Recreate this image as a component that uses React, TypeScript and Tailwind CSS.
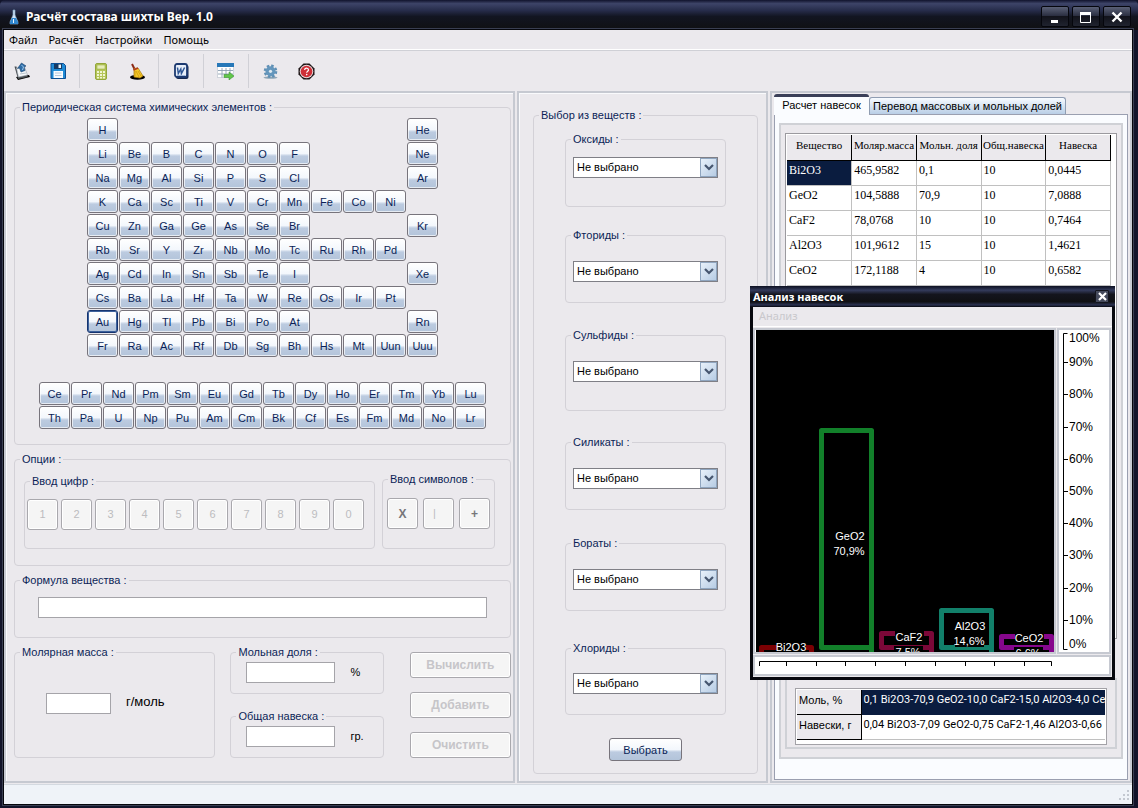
import React, { useState } from 'react';

const mainTable = [
  ['H', '', '', '', '', '', '', '', '', '', 'He'],
  ['Li', 'Be', 'B', 'C', 'N', 'O', 'F', '', '', '', 'Ne'],
  ['Na', 'Mg', 'Al', 'Si', 'P', 'S', 'Cl', '', '', '', 'Ar'],
  ['K', 'Ca', 'Sc', 'Ti', 'V', 'Cr', 'Mn', 'Fe', 'Co', 'Ni', ''],
  ['Cu', 'Zn', 'Ga', 'Ge', 'As', 'Se', 'Br', '', '', '', 'Kr'],
  ['Rb', 'Sr', 'Y', 'Zr', 'Nb', 'Mo', 'Tc', 'Ru', 'Rh', 'Pd', ''],
  ['Ag', 'Cd', 'In', 'Sn', 'Sb', 'Te', 'I', '', '', '', 'Xe'],
  ['Cs', 'Ba', 'La', 'Hf', 'Ta', 'W', 'Re', 'Os', 'Ir', 'Pt', ''],
  ['Au', 'Hg', 'Tl', 'Pb', 'Bi', 'Po', 'At', '', '', '', 'Rn'],
  ['Fr', 'Ra', 'Ac', 'Rf', 'Db', 'Sg', 'Bh', 'Hs', 'Mt', 'Uun', 'Uuu'],
];

const rareEarths = [
  'Ce', 'Pr', 'Nd', 'Pm', 'Sm', 'Eu', 'Gd', 'Tb', 'Dy', 'Ho', 'Er', 'Tm', 'Yb', 'Lu',
  'Th', 'Pa', 'U', 'Np', 'Pu', 'Am', 'Cm', 'Bk', 'Cf', 'Es', 'Fm', 'Md', 'No', 'Lr',
];

const digits = ['1', '2', '3', '4', '5', '6', '7', '8', '9', '0'];

const substances = [
  { name: 'Оксиды', margin: '', padding: 'pt-[11px] pb-[28px]' },
  { name: 'Фториды', margin: 'mt-[21px]', padding: 'pt-[19px] pb-[20px]' },
  { name: 'Сульфиды', margin: 'mt-[25px]', padding: 'pt-[19px] pb-[28px]' },
  { name: 'Силикаты', margin: 'mt-[24px]', padding: 'pt-[19px] pb-[20px]' },
  { name: 'Бораты', margin: 'mt-[26px]', padding: 'pt-[19px] pb-[20px]' },
  { name: 'Хлориды', margin: 'mt-[30px]', padding: 'pt-[18px] pb-[20px]' },
];

const columns = ['Вещество', 'Моляр.масса', 'Мольн. доля', 'Общ.навеска', 'Навеска'];
const rows = [
  ['Bi2O3', '465,9582', '0,1', '10', '0,0445'],
  ['GeO2', '104,5888', '70,9', '10', '7,0888'],
  ['CaF2', '78,0768', '10', '10', '0,7464'],
  ['Al2O3', '101,9612', '15', '10', '1,4621'],
  ['CeO2', '172,1188', '4', '10', '0,6582'],
];

interface GroupProps {
  title: string;
  className?: string;
  bodyClass?: string;
  children?: React.ReactNode;
}

const Group: React.FC<GroupProps> = ({ title, className = '', bodyClass = '', children }) => (
  <fieldset className={`min-w-0 rounded-[4px] border border-[#d3d1d7] ${className}`}>
    <legend className="ml-[5px] px-[2px] text-[11px] leading-[14px] whitespace-nowrap text-[#0b1f57]">{title} :</legend>
    <div className={bodyClass}>{children}</div>
  </fieldset>
);

const ElementButton: React.FC<{ symbol: string; focused?: boolean }> = ({ symbol, focused }) => (
  <button
    type="button"
    className={`h-[23px] w-[31px] rounded-[3px] border bg-[linear-gradient(#ffffff,#f3f7fc_50%,#bccbe0_62%,#b3c4da)] text-[11px] leading-[20px] text-[#0b1f57] ${
      focused
        ? 'border-[#153470] shadow-[inset_0_0_0_1px_#3c619c]'
        : 'border-[#77747c] shadow-[inset_0_0_0_1px_#ffffffaa]'
    }`}
  >
    {symbol}
  </button>
);

const disabledButton = 'rounded-[3px] border border-[#a9a8ad] bg-[#f5f5f5] shadow-[inset_0_0_0_1px_#ffffff]';
const textInput = 'h-[21px] border border-[#a5a4a9] bg-white px-1 text-[11px]';
const sunken = 'border-2 border-[#c6c9d1] shadow-[inset_1px_1px_0_#f9fafc]';

const Separator = () => <div className="mx-[3px] h-[34px] w-px bg-[#d0d0d6]" />;

/* ---------- toolbar icons ---------- */

const OpenIcon = () => (
  <svg width="18" height="18" viewBox="0 0 18 18">
    <path d="M3 15l13-2 1 2-12 3z" fill="#000" />
    <path d="M1.500 4.500h2l2 10 8-1.500 1.500 2-10 2z" fill="#4b5054" />
    <path d="M3.500 6l8-1 3 8-9 2z" fill="#f4f7fa" stroke="#9aa3ad" strokeWidth=".6" />
    <path d="M8.500 1l4.500 3-2 1 1 3.500-4 1.500-1.500-4-2 .5z" fill="#2f6ea8" stroke="#173f6c" strokeWidth=".6" />
    <path d="M8.500 3l2 2-1 3" fill="none" stroke="#9fc9ee" />
    <path d="M7 12l6-1" stroke="#bcc6cf" />
  </svg>
);

const SaveIcon = () => (
  <svg width="16" height="16" viewBox="0 0 16 16">
    <path d="M1 .5h12.500l2 2v13H1z" fill="#1f8bd6" stroke="#0d4f93" />
    <path d="M4 1h8v5H4z" fill="#163a63" />
    <path d="M8.500 1.500h2.500v3.500h-2.500z" fill="#e9f3fb" />
    <path d="M3.500 8h9.500v7H3.500z" fill="#f7fbff" />
    <path d="M5 10h6.500M5 12.500h6.500" stroke="#b9c9da" />
  </svg>
);

const CalcIcon = () => (
  <svg width="12" height="17" viewBox="0 0 12 17">
    <rect x=".5" y=".5" width="11" height="16" rx="1.500" fill="#b5c65a" stroke="#93a63a" />
    <rect x="2" y="2" width="8" height="4" fill="#e6edb9" stroke="#93a63a" strokeWidth=".5" />
    <g fill="#f1f5d2">
      <path d="M2 8h2v2H2zM5 8h2v2H5zM8 8h2v2H8zM2 11h2v2H2zM5 11h2v2H5zM8 11h2v2H8zM2 14h2v1.500H2zM5 14h2v1.500H5zM8 14h2v1.500H8z" />
    </g>
  </svg>
);

const BroomIcon = () => (
  <svg width="17" height="17" viewBox="0 0 17 17">
    <ellipse cx="8.500" cy="14.300" rx="7.500" ry="2.400" fill="#000" />
    <path d="M3 1l3 6" stroke="#8b2a16" strokeWidth="2" />
    <path d="M5 5.500l4-.5 5 8-3 2-6-1z" fill="#f5c926" stroke="#a8770b" strokeWidth=".7" />
    <path d="M7 8l3 6M9 8l3 5M6 8v5" stroke="#c8920f" strokeWidth=".7" />
    <path d="M4.500 7l4.500-2" stroke="#b3391e" strokeWidth="1.400" />
  </svg>
);

const WordIcon = () => (
  <svg width="15" height="17" viewBox="0 0 15 17">
    <rect x="2" y="2" width="12.500" height="14" rx="2" fill="#16284e" />
    <rect x="1" y="1" width="12" height="13" rx="2" fill="#e8eff9" stroke="#1d3a70" strokeWidth="1.800" />
    <path d="M3.500 4.500l.8 6 2.500-4.500.6 4.500 3.200-6" fill="none" stroke="#2d5594" strokeWidth="1.500" />
    <path d="M3 12.500h8" stroke="#9fb6d8" />
  </svg>
);

const TableIcon = () => (
  <svg width="18" height="17" viewBox="0 0 18 17">
    <rect x=".5" y=".5" width="16" height="14" fill="#fff" stroke="#b7c0cc" strokeWidth=".6" />
    <rect x="0" y="0" width="17" height="4" fill="#2778b8" />
    <path d="M1 7.500h15M1 11h15M5 5v9.500M9 5v9.500M13 5v9.500" stroke="#8ea0b2" strokeWidth=".9" />
    <path d="M7 11.500h5V9l5 4-5 4v-2.500H7z" fill="#62c64a" stroke="#2f8a27" strokeWidth=".5" />
  </svg>
);

const GearIcon = () => (
  <svg width="15" height="15" viewBox="0 0 15 15">
    <ellipse cx="7.500" cy="13.600" rx="7" ry="1.200" fill="#8fa5b5" />
    <circle cx="7.500" cy="7.300" r="5.400" fill="none" stroke="#5f8fb4" strokeWidth="2.800" strokeDasharray="2.400 1.840" />
    <circle cx="7.500" cy="7.300" r="5" fill="#6496bc" />
    <circle cx="7.500" cy="7.300" r="1.600" fill="#dfe9f1" />
  </svg>
);

const HelpIcon = () => (
  <svg width="17" height="17" viewBox="0 0 17 17">
    <path d="M5.500.5h6l5 5v6l-5 5h-6l-5-5v-6z" fill="#1d1416" />
    <circle cx="8.500" cy="8.500" r="6.800" fill="#e9d8da" />
    <circle cx="8.500" cy="8.500" r="5.800" fill="#cf2f38" />
    <path d="M6.700 7c0-2.600 3.800-2.300 3.800 0 0 1.300-1.800 1.300-1.800 2.700" fill="none" stroke="#fff" strokeWidth="1.200" />
    <circle cx="8.700" cy="11.600" r=".8" fill="#fff" />
  </svg>
);

const tools = [
  { label: 'Открыть', Icon: OpenIcon, width: 'w-[36px]' },
  { label: 'Сохранить', Icon: SaveIcon, width: 'w-[36px]' },
  null,
  { label: 'Вычислить', Icon: CalcIcon, width: 'w-[36px]' },
  { label: 'Очистить', Icon: BroomIcon, width: 'w-[36px]' },
  null,
  { label: 'Экспорт в Word', Icon: WordIcon, width: 'w-[38px]' },
  null,
  { label: 'Таблица', Icon: TableIcon, width: 'w-[38px]' },
  null,
  { label: 'Настройки', Icon: GearIcon, width: 'w-[36px]' },
  { label: 'Справка', Icon: HelpIcon, width: 'w-[36px]' },
];

/* ---------- window parts ---------- */

const caption = 'flex h-[21px] w-[28px] items-center justify-center rounded-[2px] border border-[#05060c] bg-[linear-gradient(#5a6076,#2c3042_45%,#12131b_50%,#20232f)]';

const TitleBar = () => (
  <header className="flex h-[30px] items-center rounded-t-[5px] bg-[linear-gradient(#10132c,#3d4468_12%,#262c4a_35%,#121521_55%,#101012)] pt-[3px] pr-[7px] pl-[8px]">
    <svg width="12" height="16" viewBox="0 0 12 16">
      <path d="M5 1h2v5l3 7v2H2v-2l3-7z" fill="#cfe4f6" stroke="#7fa0c0" strokeWidth=".7" />
      <path d="M4 9h4l2 4v2H2v-2z" fill="#2f86cf" />
      <path d="M5.500 10v4" stroke="#e8f4ff" />
    </svg>
    <h1 className="ml-[6px] flex-1 font-['Noto_Sans'] text-[12px] font-bold text-white">Расчёт состава шихты Вер. 1.0</h1>
    <div className="flex gap-[3px]">
      <button type="button" aria-label="Свернуть" className={caption}>
        <svg width="12" height="12"><path d="M2 9h7v3H2z" fill="#fff" /></svg>
      </button>
      <button type="button" aria-label="Развернуть" className={caption}>
        <svg width="12" height="12"><path d="M.5 2v9.500h10V2" fill="none" stroke="#fff" /><path d="M0 1h11v3H0z" fill="#fff" /></svg>
      </button>
      <button type="button" aria-label="Закрыть" className={caption}>
        <svg width="12" height="12"><path d="M1.500 1.500l9 9M10.500 1.500l-9 9" stroke="#fff" strokeWidth="2.400" /></svg>
      </button>
    </div>
  </header>
);

const PeriodicTable = () => (
  <Group title="Периодическая система химических элементов" bodyClass="flex flex-col items-center pt-[4px] pb-[15px]">
    <div className="grid grid-cols-[repeat(11,31px)] gap-px">
      {mainTable.flat().map((symbol, i) =>
        symbol ? <ElementButton key={i} symbol={symbol} focused={symbol === 'Au'} /> : <span key={i} />
      )}
    </div>
    <div className="mt-[25px] grid grid-cols-[repeat(14,31px)] gap-px">
      {rareEarths.map(symbol => <ElementButton key={symbol} symbol={symbol} />)}
    </div>
  </Group>
);

const Options = () => (
  <Group title="Опции" className="mt-[7px]" bodyClass="grid grid-cols-[351fr_113fr] items-end gap-[7px] pt-[6px] pr-[15px] pb-[16px] pl-[9px]">
    <Group title="Ввод цифр" bodyClass="flex gap-[3px] pt-[11px] pb-[18px] pl-[2px]">
      {digits.map(d => (
        <button key={d} type="button" disabled className={`${disabledButton} h-[31px] w-[31px] text-[11px] text-[#bcbcbf]`}>{d}</button>
      ))}
    </Group>
    <Group title="Ввод символов" bodyClass="flex gap-[5px] pt-[12px] pb-[19px] pl-[4px]">
      <button type="button" disabled className={`${disabledButton} h-[31px] w-[31px] text-[12px] font-bold text-[#77767a]`}>X</button>
      <button type="button" disabled className={`${disabledButton} h-[31px] w-[31px] pr-[8px] text-[11px] text-[#bcbcbf]`}>|</button>
      <button type="button" disabled className={`${disabledButton} h-[31px] w-[31px] text-[12px] font-bold text-[#77767a]`}>+</button>
    </Group>
  </Group>
);

const InputPanel = () => (
  <section className={`${sunken} pt-[7px] pr-[2px] pb-[23px] pl-[8px]`}>
    <PeriodicTable />
    <Options />
    <Group title="Формула вещества" className="mt-[7px]" bodyClass="px-[23px] pt-[10px] pb-[19px]">
      <input type="text" aria-label="Формула вещества" className={`${textInput} block w-full`} />
    </Group>

    <div className="mt-[7px] grid grid-cols-[201fr_153fr_112fr] gap-x-[15px]">
      <Group title="Молярная масса" bodyClass="flex items-start pt-[34px] pl-[31px]">
        <input id="molar-mass" type="text" className={`${textInput} w-[65px]`} />
        <label htmlFor="molar-mass" className="ml-[15px] text-[13px] leading-[18px]">г/моль</label>
      </Group>
      <div className="flex flex-col gap-[15px]">
        <Group title="Мольная доля" bodyClass="flex items-center pt-[3px] pb-[10px] pl-[15px]">
          <input id="mole-share" type="text" className={`${textInput} w-[89px]`} />
          <label htmlFor="mole-share" className="ml-[15px] text-[11px]">%</label>
        </Group>
        <Group title="Общая навеска" bodyClass="flex items-center pt-[3px] pb-[10px] pl-[15px]">
          <input id="total-weight" type="text" className={`${textInput} w-[89px]`} />
          <label htmlFor="total-weight" className="ml-[15px] text-[11px]">гр.</label>
        </Group>
      </div>
      <div className="ml-[11px] flex flex-col gap-[14px] pt-[7px]">
        {['Вычислить', 'Добавить', 'Очистить'].map(name => (
          <button key={name} type="button" disabled className={`${disabledButton} h-[26px] text-[12px] font-bold text-[#c6c5c9]`}>{name}</button>
        ))}
      </div>
    </div>
  </section>
);

const SubstancePanel = () => (
  <section className={`${sunken} pt-[15px] pr-[8px] pb-[7px] pl-[14px]`}>
    <Group title="Выбор из веществ" bodyClass="flex flex-col px-[31px] pt-[10px] pb-[12px]">
      {substances.map(({ name, margin, padding }) => (
        <Group key={name} title={name} className={margin} bodyClass={`px-[7px] ${padding}`}>
          <div className="relative">
            <select aria-label={name} className="block h-[21px] w-full appearance-none border border-[#7f7f86] bg-white pl-[3px] text-[11px] text-black">
              <option>Не выбрано</option>
            </select>
            <span className="pointer-events-none absolute top-px right-px flex h-[19px] w-[17px] items-center justify-center border border-[#8fa5bf] bg-[linear-gradient(135deg,#e8f1fa,#b7cce4)]">
              <svg width="10" height="7" viewBox="0 0 10 7"><path d="M1 1l4 4 4-4" fill="none" stroke="#46566f" strokeWidth="2.200" /></svg>
            </span>
          </div>
        </Group>
      ))}
      <button
        type="button"
        className="mt-[23px] h-[23px] w-[73px] self-center rounded-[3px] border border-[#77747c] bg-[linear-gradient(#ffffff,#f3f7fc_50%,#bccbe0_62%,#b3c4da)] text-[11px] leading-[20px] text-[#0b1f57]"
      >
        Выбрать
      </button>
    </Group>
  </section>
);

const ResultPanel = () => {
  const [tab, setTab] = useState(0);
  return (
    <section className="flex min-w-0 flex-col border-2 border-[#c6c9d1] px-[2px] py-px">
      <div role="tablist" className="flex items-end leading-[15px] whitespace-nowrap text-black">
        <button type="button" role="tab" aria-selected={tab === 0} onClick={() => setTab(0)} className="relative -mb-px h-[21px] w-[95px] rounded-t-[3px] border-t-[3px] border-[#3a3f58] bg-[#fafcff] pb-[2px] text-[11px]">
          Расчет навесок
        </button>
        <button type="button" role="tab" aria-selected={tab === 1} onClick={() => setTab(1)} className="h-[17px] w-[197px] rounded-t-[3px] border border-b-0 border-[#8f9db2] bg-[linear-gradient(#f7fbff,#b9cee6)] text-[11px]">
          Перевод массовых и мольных долей
        </button>
      </div>
      <div className="flex flex-1 flex-col border border-[#9a9fb0] bg-[#fafcff] px-[4px] pt-[8px] pb-[20px]">
        <div className="flex flex-1 flex-col border-2 border-[#cfd1d6] bg-[#ebe9ed] px-[4px] py-[8px]">
          <div className="flex-1 border border-[#9b9a9f] bg-white p-px pr-[5px]">
            <table className="w-full table-fixed border-collapse font-['Liberation_Serif',serif] text-[11px] leading-[14px] text-black">
              <thead>
                <tr className="h-[25px]">
                  {columns.map(c => (
                    <th key={c} className="overflow-hidden border-r border-b border-black bg-[#ebe9ed] pb-[4px] text-center font-normal whitespace-nowrap">{c}</th>
                  ))}
                </tr>
              </thead>
              <tbody>
                {rows.map((row, r) => (
                  <tr key={row[0]} className="h-[25px]">
                    {row.map((cell, c) => (
                      <td key={c} className={`border-r border-b border-[#c0c0c0] pb-[5px] pl-[2px] text-[12px] ${r === 0 && c === 0 ? 'bg-[#0a1c3f] text-white' : ''}`}>{cell}</td>
                    ))}
                  </tr>
                ))}
              </tbody>
            </table>
          </div>
          <div className="mt-[39px] border-2 border-[#cfd1d6] p-[8px] pb-[2px]">
            <div className="border border-[#a3a2a7] bg-white p-px pb-[4px]">
              <table className="w-full table-fixed border-collapse text-[11px] leading-[14px] whitespace-nowrap text-black">
                <tbody>
                  <tr className="h-[25px]">
                    <th className="w-[64px] border-r border-b border-black bg-[#ebe9ed] pb-[4px] pl-[2px] text-left font-normal">Моль, %</th>
                    <td className="overflow-hidden bg-[#0a1c3f] pb-[4px] pl-[2px] font-['Roboto'] text-white">0,1 Bi2O3-70,9 GeO2-10,0 CaF2-15,0 Al2O3-4,0 CeO2</td>
                  </tr>
                  <tr className="h-[25px]">
                    <th className="border-r border-b border-black bg-[#ebe9ed] pb-[4px] pl-[2px] text-left font-normal">Навески, г</th>
                    <td className="overflow-hidden border-b border-[#c0c0c0] pb-[4px] pl-[2px] font-['Roboto']">0,04 Bi2O3-7,09 GeO2-0,75 CaF2-1,46 Al2O3-0,66</td>
                  </tr>
                </tbody>
              </table>
            </div>
          </div>
        </div>
      </div>
    </section>
  );
};

/* ---------- analysis window ---------- */

const bars = [
  { x: 5.5, top: 317.5, bottom: 330, color: '#7b0003' },
  { x: 65.5, top: 100.5, bottom: 317.5, color: '#12802a' },
  { x: 125.5, top: 303.5, bottom: 317.5, color: '#7c0838' },
  { x: 185.5, top: 280.5, bottom: 317.5, color: '#12806a' },
  { x: 245.5, top: 306.5, bottom: 317.5, color: '#86078c' },
];

const barLabels = [
  { x: 35, y: 321, name: 'Bi2O3', share: '' },
  { x: 94, y: 210, name: 'GeO2', share: '70,9%' },
  { x: 153, y: 311, name: 'CaF2', share: '7,5%' },
  { x: 214, y: 300, name: 'Al2O3', share: '14,6%' },
  { x: 273, y: 312, name: 'CeO2', share: '6,6%' },
];

const BarChart = () => (
  <svg viewBox="0 0 298 322" className="h-[322px] w-full bg-black" fontFamily="Liberation Sans" fontSize="11">
    {bars.map(b => (
      <g key={b.x}>
        <rect x={b.x} y={b.top} width="50" height={b.bottom - b.top} fill="none" stroke={b.color} strokeWidth="5" strokeLinejoin="round" />
        <path d={`M${b.x + 50} ${b.bottom - 2}V322`} stroke={b.color} strokeWidth="5" />
      </g>
    ))}
    {barLabels.map(l => (
      <g key={l.name} fill="#fff" textAnchor="middle">
        <rect x={l.x - 14} y={l.y - 10} width="29" height="12" fill="#000" />
        <text x={l.x} y={l.y}>{l.name}</text>
        {l.share && <rect x={l.x - 15} y={l.y + 5} width="29" height="12" fill="#000" />}
        <text x={l.x - 1} y={l.y + 15}>{l.share}</text>
      </g>
    ))}
  </svg>
);

const scale = [
  { y: 33, label: '90%' },
  { y: 65, label: '80%' },
  { y: 98, label: '70%' },
  { y: 130, label: '60%' },
  { y: 162, label: '50%' },
  { y: 194, label: '40%' },
  { y: 226, label: '30%' },
  { y: 259, label: '20%' },
  { y: 291, label: '10%' },
];

const AnalysisWindow = () => (
  <div className="absolute top-[286px] right-[23px] w-[365px] border-[3px] border-t-0 border-[#07080e] bg-[#ebe9ed]">
    <div className="-mx-[3px] flex h-[21px] items-center justify-between bg-[linear-gradient(#0c0f20,#343b5c_20%,#14151d_40%,#101013_75%,#2b3252_90%,#05060c)] pr-[6px] pl-[3px]">
      <h2 className="font-['Noto_Sans'] text-[11px] leading-[16px] font-bold text-white">Анализ навесок</h2>
      <button type="button" aria-label="Закрыть анализ" className="flex h-[13px] w-[14px] items-center justify-center rounded-[1px] border border-[#14161f] bg-[#454a5c]">
        <svg width="9" height="9"><path d="M1 1l7 7M8 1l-7 7" stroke="#fff" strokeWidth="2.200" /></svg>
      </button>
    </div>
    <nav className="h-[20px] border-b border-white pl-[6px]">
      <button type="button" disabled className="block font-['Noto_Sans'] text-[11px] leading-[18px] text-[#c9c8cc]">Анализ</button>
    </nav>
    <div className="flex gap-px pt-px pr-px">
      <div className="min-w-0 flex-1 border-2 border-[#c6c9d1] bg-white pl-px">
        <BarChart />
      </div>
      <div className="w-[54px] shrink-0 border-2 border-[#c6c9d1] bg-white">
        <svg viewBox="0 0 50 322" className="h-[322px] w-[50px]" fontFamily="Liberation Sans" fontSize="12">
          <path d="M8.500 3.500h-4v316h4" fill="none" stroke="#000" />
          {scale.map(s => <path key={s.y} d={`M4 ${s.y - 0.5}h5`} stroke="#000" />)}
          <text x="10" y="12">100%</text>
          {scale.map(s => <text key={s.label} x="10" y={s.y + 3}>{s.label}</text>)}
          <text x="10" y="318">0%</text>
        </svg>
      </div>
    </div>
    <div className="mt-px mr-px mb-px h-[21px] border-2 border-[#c6c9d1] bg-white">
      <svg width="300" height="16" viewBox="0 0 300 16">
        <path d="M4.500 9V4.500h292V9M31.500 4v5M61.500 4v5M90.500 4v5M120.500 4v5M150.500 4v5M180.500 4v5M210.500 4v5M239.500 4v5M269.500 4v5" fill="none" stroke="#000" />
      </svg>
    </div>
  </div>
);

export default function App() {
  return (
    <div className="relative flex min-h-screen flex-col bg-[#12142a] font-['Liberation_Sans',sans-serif]">
      <TitleBar />
      <div className="mr-[6px] mb-[5px] ml-[4px] flex flex-1 flex-col bg-[#ebe9ed] shadow-[0_0_0_1px_#05060c,0_0_0_2px_#3a3f52]">
        <nav className="flex h-[20px] gap-[11px] border-b border-white pl-[5px] font-['Noto_Sans'] text-[11px] leading-[18px] text-black">
          <button type="button">Файл</button>
          <button type="button">Расчёт</button>
          <button type="button">Настройки</button>
          <button type="button">Помощь</button>
        </nav>
        <div role="toolbar" className="flex h-[41px] items-center border-t border-[#cfd0d6]">
          {tools.map((tool, i) =>
            tool ? (
              <button key={i} type="button" aria-label={tool.label} className={`flex h-[36px] items-center justify-center ${tool.width}`}>
                <tool.Icon />
              </button>
            ) : (
              <Separator key={i} />
            )
          )}
        </div>
        <main className="grid flex-1 grid-cols-[minmax(0,511fr)_minmax(0,251fr)_minmax(0,362fr)] gap-x-[2px]">
          <InputPanel />
          <SubstancePanel />
          <ResultPanel />
        </main>
        <footer className="mt-px flex h-[20px] items-end justify-end border-t border-[#d4d9e0] bg-[#eff3f8] p-[2px]">
          <svg width="12" height="12" fill="#c3c8d0">
            <path d="M9 0h2v2H9zM5 4h2v2H5zM9 4h2v2H9zM1 8h2v2H1zM5 8h2v2H5zM9 8h2v2H9z" />
          </svg>
        </footer>
      </div>
      <AnalysisWindow />
    </div>
  );
}
